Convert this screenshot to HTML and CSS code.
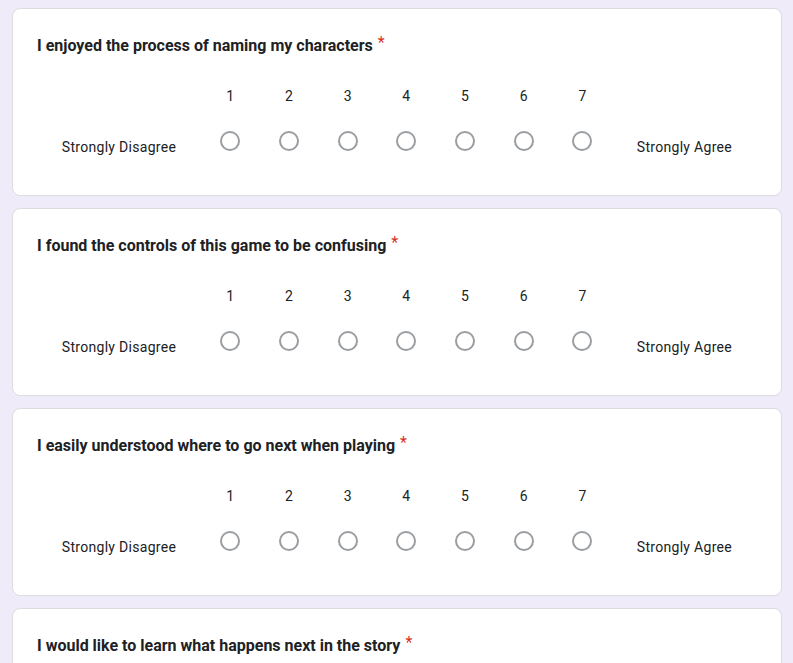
FILE: index.html
```html
<!DOCTYPE html>
<html>
<head>
<meta charset="utf-8">
<link rel="stylesheet" href="styles.css">
</head>
<body>
<div class="page">
  <div class="card">
    <div class="title">I enjoyed the process of naming my characters<span class="req">*</span></div>
    <div class="scale">
      <div class="row nums">
        <div class="lab-left"></div>
        <div class="col">1</div><div class="col">2</div><div class="col">3</div><div class="col">4</div><div class="col">5</div><div class="col">6</div><div class="col">7</div>
        <div class="lab-right"></div>
      </div>
      <div class="row radios">
        <div class="lab-left text">Strongly Disagree</div>
        <div class="col"><span class="radio"></span></div><div class="col"><span class="radio"></span></div><div class="col"><span class="radio"></span></div><div class="col"><span class="radio"></span></div><div class="col"><span class="radio"></span></div><div class="col"><span class="radio"></span></div><div class="col"><span class="radio"></span></div>
        <div class="lab-right text">Strongly Agree</div>
      </div>
    </div>
  </div>
  <div class="card">
    <div class="title">I found the controls of this game to be confusing<span class="req">*</span></div>
    <div class="scale">
      <div class="row nums">
        <div class="lab-left"></div>
        <div class="col">1</div><div class="col">2</div><div class="col">3</div><div class="col">4</div><div class="col">5</div><div class="col">6</div><div class="col">7</div>
        <div class="lab-right"></div>
      </div>
      <div class="row radios">
        <div class="lab-left text">Strongly Disagree</div>
        <div class="col"><span class="radio"></span></div><div class="col"><span class="radio"></span></div><div class="col"><span class="radio"></span></div><div class="col"><span class="radio"></span></div><div class="col"><span class="radio"></span></div><div class="col"><span class="radio"></span></div><div class="col"><span class="radio"></span></div>
        <div class="lab-right text">Strongly Agree</div>
      </div>
    </div>
  </div>
  <div class="card">
    <div class="title">I easily understood where to go next when playing<span class="req">*</span></div>
    <div class="scale">
      <div class="row nums">
        <div class="lab-left"></div>
        <div class="col">1</div><div class="col">2</div><div class="col">3</div><div class="col">4</div><div class="col">5</div><div class="col">6</div><div class="col">7</div>
        <div class="lab-right"></div>
      </div>
      <div class="row radios">
        <div class="lab-left text">Strongly Disagree</div>
        <div class="col"><span class="radio"></span></div><div class="col"><span class="radio"></span></div><div class="col"><span class="radio"></span></div><div class="col"><span class="radio"></span></div><div class="col"><span class="radio"></span></div><div class="col"><span class="radio"></span></div><div class="col"><span class="radio"></span></div>
        <div class="lab-right text">Strongly Agree</div>
      </div>
    </div>
  </div>
  <div class="card">
    <div class="title">I would like to learn what happens next in the story<span class="req">*</span></div>
    <div class="scale">
      <div class="row nums">
        <div class="lab-left"></div>
        <div class="col">1</div><div class="col">2</div><div class="col">3</div><div class="col">4</div><div class="col">5</div><div class="col">6</div><div class="col">7</div>
        <div class="lab-right"></div>
      </div>
      <div class="row radios">
        <div class="lab-left text">Strongly Disagree</div>
        <div class="col"><span class="radio"></span></div><div class="col"><span class="radio"></span></div><div class="col"><span class="radio"></span></div><div class="col"><span class="radio"></span></div><div class="col"><span class="radio"></span></div><div class="col"><span class="radio"></span></div><div class="col"><span class="radio"></span></div>
        <div class="lab-right text">Strongly Agree</div>
      </div>
    </div>
  </div>
</div>
</body>
</html>
```
FILE: styles.css
```css
html, body {
  margin: 0;
  padding: 0;
  background: #f0ebf8;
  font-family: Roboto, "Liberation Sans", Arial, sans-serif;
  color: #202124;
}
.page {
  padding-top: 8px;
  overflow: hidden;
}
.card {
  box-sizing: border-box;
  height: 188px;
  margin: 0 11px 12px 12px;
  background: #fff;
  border: 1px solid #dadce0;
  border-radius: 8px;
  padding: 25px 24px 24px;
}
.title {
  font-size: 16px;
  line-height: 24px;
  font-weight: 700;
}
.req {
  color: #d93025;
  font-weight: 400;
  font-size: 16px;
  padding-left: 5px;
  position: relative;
  top: -3px;
}
.scale {
  margin-top: 26px;
}
.row {
  display: flex;
  font-size: 14px;
  line-height: 20px;
  letter-spacing: 0.3px;
}
.nums {
  height: 24px;
  line-height: 24px;
}
.radios {
  margin-top: 23px;
  height: 26px;
  align-items: flex-start;
}
.lab-left {
  flex: 0 0 164px;
  text-align: center;
}
.lab-right {
  flex: 1 1 auto;
  text-align: center;
}
.text {
  padding-top: 6px;
}
.col {
  flex: 0 0 58.7px;
  display: flex;
  justify-content: center;
}
.radio {
  box-sizing: border-box;
  width: 20px;
  height: 20px;
  border: 2px solid #9a9da1;
  border-radius: 50%;
}
```
